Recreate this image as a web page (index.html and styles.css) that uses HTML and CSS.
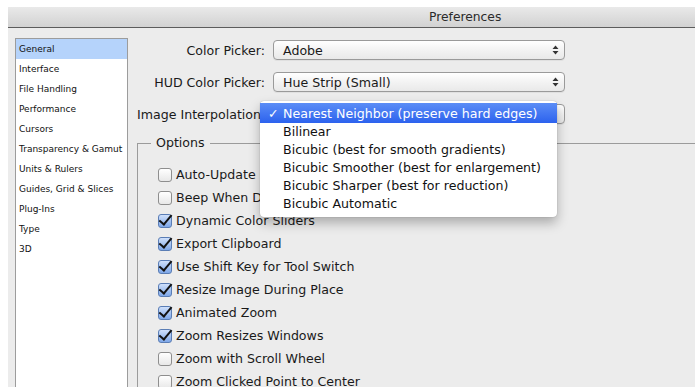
FILE: index.html
```html
<!DOCTYPE html>
<html>
<head>
<meta charset="utf-8">
<link rel="stylesheet" href="styles.css">
</head>
<body>
<div class="window">
  <div class="titlebar"><span class="title">Preferences</span></div>
  <div class="wbody">
    <ul class="sidebar">
      <li class="sel">General</li>
      <li>Interface</li>
      <li>File Handling</li>
      <li>Performance</li>
      <li>Cursors</li>
      <li>Transparency &amp; Gamut</li>
      <li>Units &amp; Rulers</li>
      <li>Guides, Grid &amp; Slices</li>
      <li>Plug-Ins</li>
      <li>Type</li>
      <li>3D</li>
    </ul>
    <div class="main">
      <div class="rows">
        <div class="row">
          <label class="lbl">Color Picker:</label>
          <div class="select"><span>Adobe</span>
            <svg class="arr" width="7" height="10" viewBox="0 0 7 10"><path d="M3.5 0.5 L6.5 4 H0.5 Z M3.5 9.5 L6.5 6 H0.5 Z" fill="#333"/></svg>
          </div>
        </div>
        <div class="row">
          <label class="lbl">HUD Color Picker:</label>
          <div class="select"><span>Hue Strip (Small)</span>
            <svg class="arr" width="7" height="10" viewBox="0 0 7 10"><path d="M3.5 0.5 L6.5 4 H0.5 Z M3.5 9.5 L6.5 6 H0.5 Z" fill="#333"/></svg>
          </div>
        </div>
        <div class="row">
          <label class="lbl">Image Interpolation:</label>
          <div class="select"><span>Nearest Neighbor (preserve hard edges)</span>
            <div class="menu">
              <div class="mi on"><span class="ck">✓</span>Nearest Neighbor (preserve hard edges)</div>
              <div class="mi">Bilinear</div>
              <div class="mi">Bicubic (best for smooth gradients)</div>
              <div class="mi">Bicubic Smoother (best for enlargement)</div>
              <div class="mi">Bicubic Sharper (best for reduction)</div>
              <div class="mi">Bicubic Automatic</div>
            </div>
          </div>
        </div>
      </div>
      <fieldset class="group">
        <legend>Options</legend>
        <ul class="checks">
          <li><span class="cb"></span>Auto-Update Open Documents</li>
          <li><span class="cb"></span>Beep When Done</li>
          <li><span class="cb on"></span>Dynamic Color Sliders</li>
          <li><span class="cb on"></span>Export Clipboard</li>
          <li><span class="cb on"></span>Use Shift Key for Tool Switch</li>
          <li><span class="cb on"></span>Resize Image During Place</li>
          <li><span class="cb on"></span>Animated Zoom</li>
          <li><span class="cb on"></span>Zoom Resizes Windows</li>
          <li><span class="cb"></span>Zoom with Scroll Wheel</li>
          <li><span class="cb"></span>Zoom Clicked Point to Center</li>
        </ul>
      </fieldset>
    </div>
  </div>
</div>
</body>
</html>
```
FILE: styles.css
```css
html, body {
  margin: 0;
  padding: 0;
  background: #ffffff;
}
body {
  width: 695px;
  height: 392px;
  overflow: hidden;
  font-family: "DejaVu Sans", "Liberation Sans", sans-serif;
  color: #1a1a1a;
}
.window {
  margin: 7px 0 0 8px;
  height: 380px;
  background: #ececec;
  overflow: hidden;
  display: flex;
  flex-direction: column;
}
.titlebar {
  height: 20px;
  flex: none;
  background: linear-gradient(#e9e9e9, #d2d2d2);
  border-bottom: 1px solid #5c5c5c;
  display: flex;
  align-items: center;
  padding-left: 421px;
  font-size: 12.3px;
  color: #2b2b2b;
}
.wbody {
  flex: 1;
  display: flex;
  padding: 10px 0 0 7px;
  min-height: 0;
}
.sidebar {
  list-style: none;
  margin: 0;
  padding: 0;
  width: 111px;
  height: 400px;
  flex: none;
  background: #fff;
  border: 1px solid #9c9c9c;
  font-size: 9px;
  color: #111;
}
.sidebar li {
  height: 20px;
  line-height: 20px;
  padding-left: 3px;
  white-space: nowrap;
}
.sidebar li.sel {
  background: #b5d3fb;
}
.main {
  flex: 1;
  margin-left: 9px;
  display: flex;
  flex-direction: column;
  min-width: 0;
}
.rows {
  padding-top: 2px;
  display: flex;
  flex-direction: column;
  gap: 12px;
}
.row {
  display: flex;
  align-items: center;
  height: 20px;
  font-size: 12.6px;
}
.lbl {
  width: 128px;
  text-align: right;
  white-space: nowrap;
  margin-right: 8px;
}
.select {
  position: relative;
  width: 281px;
  height: 18px;
  border: 1px solid #9a9a9a;
  border-radius: 4px;
  background: linear-gradient(#ffffff, #f3f3f3 50%, #e9e9e9);
  display: flex;
  align-items: center;
  padding-left: 9px;
  box-sizing: content-box;
  box-shadow: 0 1px 0 rgba(0,0,0,0.05);
}
.select span {
  flex: 1;
  white-space: nowrap;
}
.arr {
  margin-right: 5px;
}
.menu {
  position: absolute;
  left: -14px;
  top: -4px;
  width: 297px;
  height: 116px;
  background: #fff;
  border-radius: 4px;
  box-shadow: 0 6px 12px rgba(0,0,0,0.28), 0 0 1px rgba(0,0,0,0.35);
  padding-top: 2px;
  box-sizing: border-box;
  z-index: 5;
}
.mi {
  height: 18px;
  line-height: 18px;
  padding-left: 23px;
  position: relative;
  white-space: nowrap;
  font-size: 12.6px;
  color: #111;
}
.mi.on {
  height: 20px;
  line-height: 22px;
  background: linear-gradient(#5b8df6, #2c62ee);
  color: #fff;
}
.ck {
  position: absolute;
  left: 8px;
}
.group {
  margin: 11px 0 0 0;
  padding: 0;
  border: 1px solid #9b9b9b;
  border-right: none;
  border-bottom: none;
  min-width: 0;
}
.group legend {
  font-size: 12.6px;
  padding: 0 5px;
  margin-left: 13px;
  line-height: 16px;
}
.checks {
  list-style: none;
  margin: 0;
  padding: 12px 0 0 20px;
  font-size: 12.6px;
}
.checks li {
  height: 23px;
  display: flex;
  align-items: center;
  white-space: nowrap;
}
.cb {
  position: relative;
  width: 12px;
  height: 12px;
  border: 1px solid #8e8e8e;
  border-radius: 3px;
  background: linear-gradient(#ffffff, #e8e8e8);
  margin-right: 4px;
  flex: none;
}
.cb.on {
  background: linear-gradient(#cfe0fb, #7ea7e8);
  border-color: #5a7db5;
}
.cb.on::after {
  content: "";
  position: absolute;
  left: 3px;
  top: -3px;
  width: 5px;
  height: 11px;
  border-right: 2.5px solid #111;
  border-bottom: 2.5px solid #111;
  transform: rotate(40deg);
  transform-origin: center;
}
```
